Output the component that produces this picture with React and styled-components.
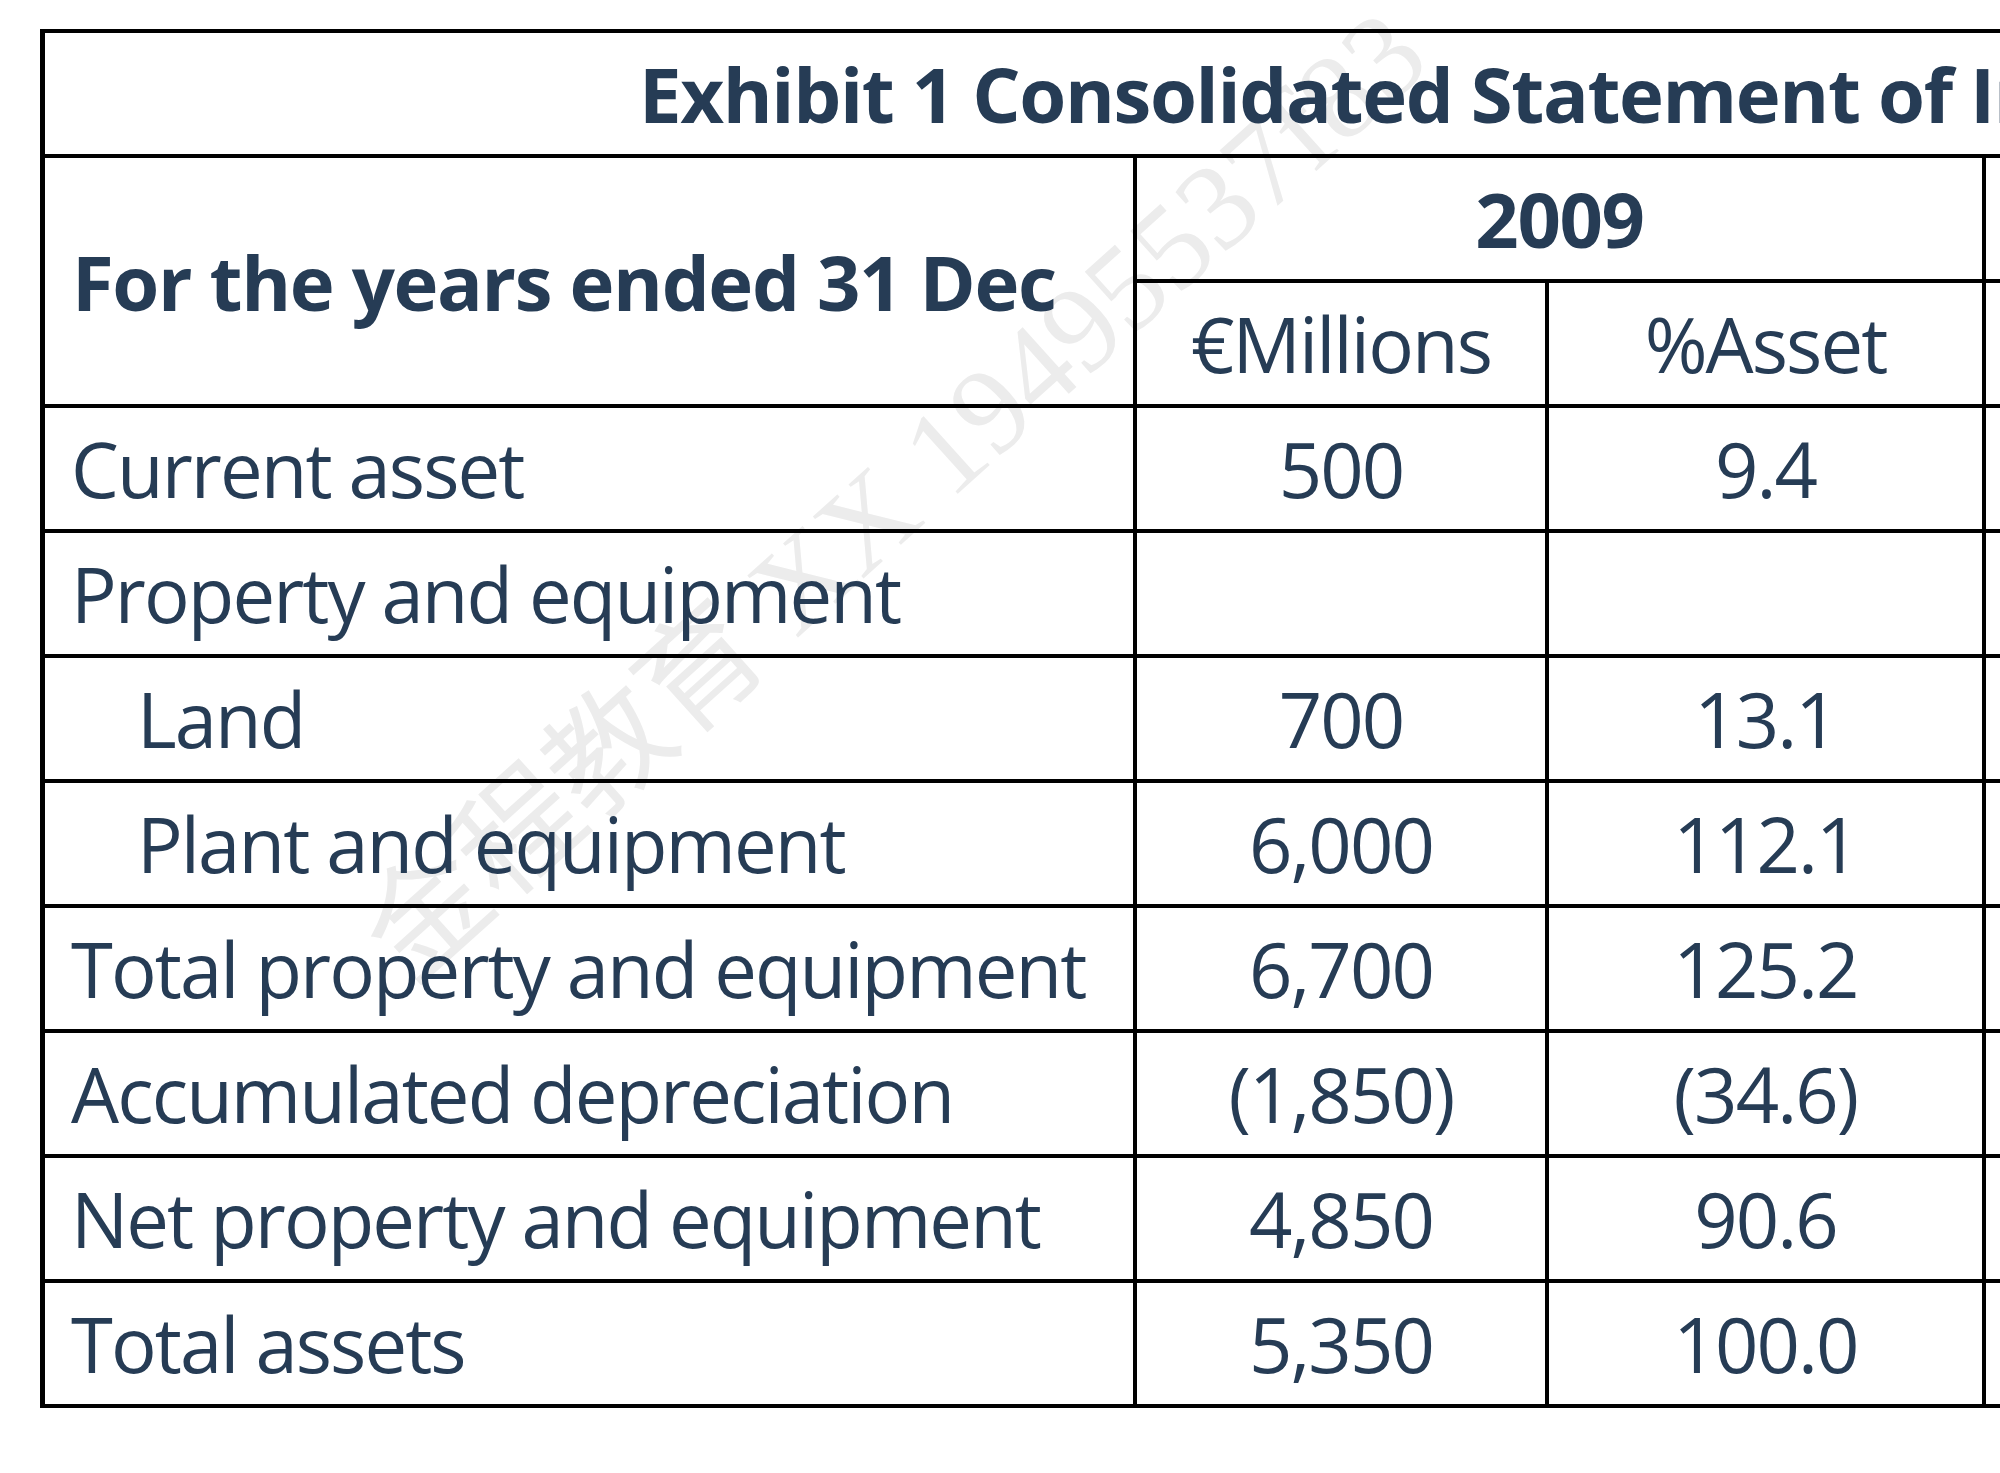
import React from "react";
import styled, { createGlobalStyle } from "styled-components";

const GlobalStyle = createGlobalStyle`
	html, body {
		margin: 0;
		padding: 0;
		background: #ffffff;
		overflow: hidden;
	}
	* {
		box-sizing: border-box;
	}
`;

const Page = styled.div`
	position: relative;
	width: 2000px;
	height: 1473px;
	overflow: hidden;
	padding: 29px 0 0 40px;
	font-family: "Open Sans", "Noto Sans", sans-serif;
	color: #263c55;
`;

const Watermark = styled.div`
	position: absolute;
	left: 375px;
	top: 858px;
	z-index: 0;
	transform: rotate(-42deg);
	transform-origin: 0 50%;
	font-family: "Liberation Serif", "Noto Sans CJK SC", serif;
	font-size: 122px;
	color: #ececec;
	white-space: nowrap;
	pointer-events: none;
`;

const Sheet = styled.div`
	position: relative;
	z-index: 1;
	display: grid;
	grid-template-columns: 1092px 412px 437px 412px 437px;
	grid-auto-rows: 125px;
	width: max-content;
	border-top: 4px solid #000;
	border-left: 5px solid #000;
`;

const Cell = styled.div`
	display: flex;
	align-items: center;
	justify-content: ${(p) => (p.$left ? "flex-start" : "center")};
	padding-left: ${(p) => p.$indent || 0}px;
	grid-column: ${(p) => p.$col || "auto"};
	grid-row: ${(p) => p.$row || "auto"};
	border-right: 4px solid #000;
	border-bottom: 4px solid #000;
	font-size: 76px;
	font-weight: ${(p) => (p.$bold ? 700 : 400)};
	letter-spacing: ${(p) => (p.$bold ? "-0.018em" : "-0.025em")};
	white-space: nowrap;
`;

const rows = [
	{ label: "Current asset", m: "500", p: "9.4" },
	{ label: "Property and equipment", m: "", p: "" },
	{ label: "Land", m: "700", p: "13.1", sub: true },
	{ label: "Plant and equipment", m: "6,000", p: "112.1", sub: true },
	{ label: "Total property and equipment", m: "6,700", p: "125.2" },
	{ label: "Accumulated depreciation", m: "(1,850)", p: "(34.6)" },
	{ label: "Net property and equipment", m: "4,850", p: "90.6" },
	{ label: "Total assets", m: "5,350", p: "100.0" },
];

const App = () => {
	return (
		<Page>
			<GlobalStyle />
			<Watermark>金程教育 XX 19495537f83</Watermark>
			<Sheet>
				<Cell $col="1 / -1" $left $indent={594} $bold>
					Exhibit 1 Consolidated Statement of Income
				</Cell>

				<Cell $row="span 2" $left $indent={27} $bold>
					For the years ended 31 Dec
				</Cell>
				<Cell $col="span 2" $bold>2009</Cell>
				<Cell $col="span 2" $bold>2010</Cell>
				<Cell>€Millions</Cell>
				<Cell>%Asset</Cell>
				<Cell>€Millions</Cell>
				<Cell>%Asset</Cell>

				{rows.map((r) => (
					<React.Fragment key={r.label}>
						<Cell $left $indent={r.sub ? 92 : 26}>{r.label}</Cell>
						<Cell>{r.m}</Cell>
						<Cell>{r.p}</Cell>
						<Cell />
						<Cell />
					</React.Fragment>
				))}
			</Sheet>
		</Page>
	);
};

export default App;
